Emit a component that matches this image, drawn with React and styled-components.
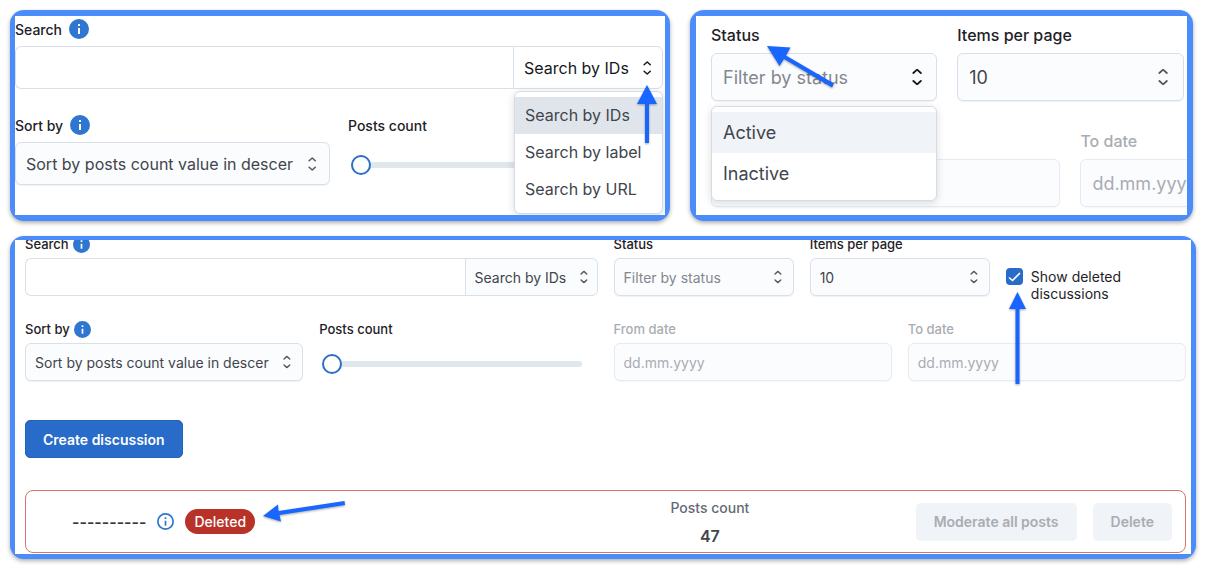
import React from "react";
import styled, { createGlobalStyle, ThemeProvider, css } from "styled-components";

const GlobalStyle = createGlobalStyle`
  *, *::before, *::after { box-sizing: border-box; }
  body {
    margin: 0;
    background: #fff;
    color: #1e2227;
    font-family: Inter, "Liberation Sans", sans-serif;
  }
  input, select, button { font-family: inherit; margin: 0; }
`;

const sizes = {
  medium: { label: 14, text: 16, field: 43, fieldPad: 10, labelRow: 24, labelGap: 5, icon: 20, iconGap: 7, colGap: 18, rowGap: 24, chevron: 14, chevronRight: 14, option: 37, addon: 150 },
  large: { label: 16, text: 18, field: 48, fieldPad: 11, labelRow: 24, labelGap: 6, icon: 20, iconGap: 7, colGap: 20, rowGap: 28, chevron: 17, chevronRight: 15, option: 41, addon: 150 },
  small: { label: 13, text: 14, field: 38, fieldPad: 9, labelRow: 20, labelGap: 4, icon: 17, iconGap: 4, colGap: 16, rowGap: 23, chevron: 13, chevronRight: 12, option: 32, addon: 133 },
};

const Page = styled.main`
  display: flex;
  flex-direction: column;
  gap: 15px;
  padding: 10px 16px 13px 10px;
`;

const TopRow = styled.div`
  display: grid;
  grid-template-columns: minmax(0, 660fr) minmax(0, 503fr);
  gap: 20px;
  padding-right: 3px;
`;

const Frame = styled.section`
  display: flex;
  padding: ${(p) => p.$edge || "6px"};
  border-radius: 14px;
  background: #4a8cf9;
  box-shadow: 0 2px 4px rgba(0, 0, 0, 0.32);
`;

const Screen = styled.div`
  flex: 1;
  min-width: 0;
  overflow: hidden;
  background: #fff;
  padding: ${(p) => p.$pad};
`;

const Rows = styled.form`
  display: flex;
  flex-direction: column;
  gap: ${(p) => p.theme.rowGap}px;
  width: ${(p) => p.$width || "auto"};
  margin-top: ${(p) => p.$top || 0};
`;

const Columns = styled.div`
  display: grid;
  grid-template-columns: ${(p) => p.$cols};
  column-gap: ${(p) => p.theme.colGap}px;
  align-items: ${(p) => p.$align || "start"};
`;

const Field = styled.div`
  position: relative;
  display: flex;
  flex-direction: column;
  gap: ${(p) => p.theme.labelGap}px;
  min-width: 0;
`;

const LabelRow = styled.div`
  display: flex;
  align-items: center;
  gap: ${(p) => p.theme.iconGap}px;
  height: ${(p) => p.theme.labelRow}px;
`;

const Label = styled.label`
  font-size: ${(p) => p.theme.label}px;
  font-weight: 500;
  white-space: nowrap;
  color: ${(p) => (p.$muted ? "#a8acb3" : "#1e2227")};
`;

const box = css`
  width: 100%;
  height: ${(p) => p.theme.field}px;
  padding: 0 ${(p) => p.theme.fieldPad}px;
  border: 1px solid #d9e0e9;
  border-radius: 6px;
  background: #fbfcfe;
  font-size: ${(p) => p.theme.text}px;
  color: #41454c;
  outline: none;
`;

const SelectWrap = styled.div`
  position: relative;
  display: flex;
  flex: ${(p) => (p.$addon ? `0 0 ${p.theme.addon}px` : "none")};
  color: ${(p) => (p.$active ? "#15181c" : "#545962")};
`;

const NativeSelect = styled.select`
  ${box}
  appearance: none;
  padding-right: 24px;
  box-shadow: 0 1px 1px rgba(30, 50, 80, 0.07);
  ${(p) => p.$placeholder && "color: #83878e;"}
  ${(p) => p.$addon && "border-radius: 0 6px 6px 0; box-shadow: none; padding-right: 0;"}
  ${(p) => p.$active && p.$addon && "background: #fff; color: #15181c;"}
`;

const Chevron = styled.svg`
  position: absolute;
  top: 50%;
  right: ${(p) => p.theme.chevronRight - (p.$addon ? 2 : 0)}px;
  height: ${(p) => p.theme.chevron}px;
  transform: translateY(-50%);
  pointer-events: none;
`;

const SearchGroup = styled.div`
  display: flex;
`;

const SearchInput = styled.input`
  ${box}
  flex: 1;
  min-width: 0;
  border-right: 0;
  border-radius: 6px 0 0 6px;
  background: #fff;
`;

const DateInput = styled.input`
  ${box}
  border-color: #e6ebf1;
  box-shadow: 0 1px 1px rgba(30, 50, 80, 0.04);
  &::placeholder { color: #a8acb3; opacity: 1; }
`;

const Slider = styled.input`
  appearance: none;
  align-self: stretch;
  height: 20px;
  margin: ${(p) => (p.theme.field >> 1) - 8}px 16px 0 3px;
  background: transparent;
  &::-webkit-slider-runnable-track {
    height: 6px;
    border-radius: 3px;
    background: #dfe6ec;
  }
  &::-webkit-slider-thumb {
    appearance: none;
    width: 20px;
    height: 20px;
    margin-top: -7px;
    border: 2px solid #2a6fc9;
    border-radius: 50%;
    background: #fff;
  }
`;

const Menu = styled.ul`
  position: absolute;
  top: calc(100% + ${(p) => p.$offset}px);
  right: 0;
  width: ${(p) => p.$width};
  margin: 0;
  padding: 5px 0 ${(p) => p.$bottom}px;
  list-style: none;
  border: 1px solid #d5dce5;
  border-radius: 6px;
  background: #fff;
  box-shadow: 0 2px 8px rgba(0, 0, 0, 0.14);
  z-index: 1;
`;

const Option = styled.li`
  height: ${(p) => p.theme.option}px;
  line-height: ${(p) => p.theme.option}px;
  padding: 0 ${(p) => p.theme.fieldPad}px;
  font-size: ${(p) => p.theme.text}px;
  color: #41454c;
  background: ${(p) => p.$tint || "transparent"};
`;

const CheckLabel = styled.label`
  position: relative;
  display: flex;
  align-items: flex-start;
  gap: 8px;
  margin-bottom: -6px;
  padding-top: 34px;
  font-size: 14px;
  line-height: 17px;
`;

const CheckBox = styled.input`
  appearance: none;
  flex: none;
  width: 17px;
  height: 17px;
  border-radius: 4px;
  background: #286bc8;
`;

const CheckMark = styled.svg`
  position: absolute;
  left: 2px;
  top: 36px;
`;

const Arrow = styled.svg`
  position: absolute;
  top: ${(p) => p.$top};
  left: ${(p) => p.$left};
  right: ${(p) => p.$right};
  fill: #1866ff;
  filter: drop-shadow(0 1px 1px rgba(0, 0, 0, 0.35));
  pointer-events: none;
  z-index: 2;
`;

const CreateButton = styled.button`
  display: block;
  height: 38px;
  margin-top: 39px;
  padding: 0 17px;
  border: 1px solid #2263bd;
  border-radius: 5px;
  background: #286bc8;
  color: #fff;
  font-size: 14px;
  font-weight: 600;
`;

const Card = styled.article`
  display: grid;
  grid-template-columns: 21fr 20fr auto;
  align-items: center;
  height: 63px;
  margin-top: 32px;
  padding: 0 13px 0 46px;
  border: 1px solid #d8736c;
  border-radius: 8px;
`;

const Title = styled.div`
  display: flex;
  align-items: center;
  gap: 11px;
  font-size: 16px;
  font-weight: 600;
  color: #35393f;
`;

const Badge = styled.span`
  position: relative;
  padding: 0 9px;
  border-radius: 13px;
  background: #b83227;
  color: #fff;
  font-size: 14px;
  font-weight: 500;
  line-height: 25px;
`;

const Stat = styled.div`
  display: flex;
  flex-direction: column;
  align-items: center;
  gap: 8px;
  line-height: 20px;
`;

const StatLabel = styled.span`
  font-size: 14px;
  font-weight: 500;
  color: #656a73;
`;

const StatValue = styled.span`
  font-size: 16px;
  font-weight: 600;
  color: #41454c;
`;

const Actions = styled.div`
  display: flex;
  gap: 16px;
`;

const QuietButton = styled.button`
  height: 38px;
  padding: 0 18px;
  border: 0;
  border-radius: 5px;
  background: #f0f3f8;
  color: #a9adb3;
  font-size: 14px;
  font-weight: 600;
`;

const InfoSvg = styled.svg`
  flex: none;
  width: ${(p) => p.theme.icon}px;
  height: ${(p) => p.theme.icon}px;
  fill: #2f76d0;
`;

const Info = () => (
  <InfoSvg viewBox="2 2 20 20" aria-hidden="true">
    <path d="M12 2a10 10 0 1 0 0 20 10 10 0 0 0 0-20zm1 15h-2v-6h2v6zm0-8h-2V7h2v2z" />
  </InfoSvg>
);

const InfoOutline = () => (
  <InfoSvg viewBox="2 2 20 20" aria-hidden="true">
    <path d="M11 7h2v2h-2zm0 4h2v6h-2zm1-9a10 10 0 1 0 0 20 10 10 0 0 0 0-20zm0 18a8 8 0 1 1 0-16 8 8 0 0 1 0 16z" />
  </InfoSvg>
);

const Select = ({ id, value, addon, active, placeholder }) => (
  <SelectWrap $addon={addon} $active={active}>
    <NativeSelect id={id} aria-label={addon ? "Search mode" : undefined} $addon={addon} $active={active} $placeholder={placeholder}>
      <option>{value}</option>
    </NativeSelect>
    <Chevron $addon={addon} viewBox="0 0 9 15" fill="none" stroke="currentColor" strokeWidth="1.6" strokeLinecap="round" strokeLinejoin="round" aria-hidden="true">
      <path d="M1.200 4 4.500 1 7.800 4M1.200 11 4.500 14 7.800 11" />
    </Chevron>
  </SelectWrap>
);

const LabeledField = ({ id, label, info, muted, children }) => (
  <Field>
    {label && (
      <LabelRow>
        <Label htmlFor={id} $muted={muted}>{label}</Label>
        {info && <Info />}
      </LabelRow>
    )}
    {children}
  </Field>
);

const SearchPanel = () => (
  <ThemeProvider theme={sizes.medium}>
    <Frame $edge="6px 5px">
      <Screen $pad="1px 2px 30px 0">
        <Rows>
          <LabeledField id="a-search" label="Search" info>
            <SearchGroup>
              <SearchInput id="a-search" type="text" />
              <Select addon active value="Search by IDs" />
            </SearchGroup>
            <Menu role="listbox" aria-label="Search mode" $offset={2} $width="149px" $bottom={5}>
              <Option role="option" aria-selected="true" $tint="#dfe5eb">Search by IDs</Option>
              <Option role="option" aria-selected="false">Search by label</Option>
              <Option role="option" aria-selected="false">Search by URL</Option>
            </Menu>
            <Arrow $top="68px" $right="6px" width="20" height="59" aria-hidden="true">
              <path d="M10 0 20 19H12V58H8V19H0z" />
            </Arrow>
          </LabeledField>
          <Columns $cols="minmax(0, 1fr) minmax(0, 1fr)">
            <LabeledField id="a-sort" label="Sort by" info>
              <Select id="a-sort" value="Sort by posts count value in descer" />
            </LabeledField>
            <LabeledField id="a-count" label="Posts count">
              <Slider id="a-count" type="range" min="0" max="100" defaultValue="0" />
            </LabeledField>
          </Columns>
        </Rows>
      </Screen>
    </Frame>
  </ThemeProvider>
);

const StatusPanel = () => (
  <ThemeProvider theme={sizes.large}>
    <Frame>
      <Screen $pad="7px 0 7px 15px">
        <Rows $width="151%">
          <Columns $cols="repeat(3, minmax(0, 1fr))">
            <LabeledField id="b-status" label="Status">
              <Select id="b-status" active placeholder value="Filter by status" />
              <Menu role="listbox" aria-label="Status" $offset={5} $width="100%" $bottom={6}>
                <Option role="option" aria-selected="true" $tint="#f0f3f8">Active</Option>
                <Option role="option" aria-selected="false">Inactive</Option>
              </Menu>
              <Arrow $top="23px" $left="56px" width="68" height="42" aria-hidden="true">
                <path d="M0 0 23.500 1.500 19 9.500 67 37.500 65 41.500 17 13 12.500 20z" />
              </Arrow>
            </LabeledField>
            <LabeledField id="b-items" label="Items per page">
              <Select id="b-items" value="10" />
            </LabeledField>
          </Columns>
          <Columns $cols="repeat(2, minmax(0, 1fr))" $align="end">
            <LabeledField>
              <DateInput type="text" aria-label="Start" disabled />
            </LabeledField>
            <LabeledField id="b-to" label="To date" muted>
              <DateInput id="b-to" type="text" placeholder="dd.mm.yyyy" disabled />
            </LabeledField>
          </Columns>
        </Rows>
      </Screen>
    </Frame>
  </ThemeProvider>
);

const DiscussionPanel = () => (
  <ThemeProvider theme={sizes.small}>
    <Frame $edge="4px 5px 5px">
      <Screen $pad="0 5px 1px 10px">
        <Rows $top="-6px">
          <Columns $cols="repeat(2, minmax(0, 1fr))">
            <LabeledField id="c-search" label="Search" info>
              <SearchGroup>
                <SearchInput id="c-search" type="text" />
                <Select addon value="Search by IDs" />
              </SearchGroup>
            </LabeledField>
            <Columns $cols="repeat(3, minmax(0, 1fr))">
              <LabeledField id="c-status" label="Status">
                <Select id="c-status" placeholder value="Filter by status" />
              </LabeledField>
              <LabeledField id="c-items" label="Items per page">
                <Select id="c-items" value="10" />
              </LabeledField>
              <CheckLabel>
                <CheckBox type="checkbox" defaultChecked />
                <CheckMark width="13" height="13" fill="none" stroke="#fff" strokeWidth="1.6" aria-hidden="true">
                  <path d="M1 7.500 4.500 10.500 12 3" />
                </CheckMark>
                Show deleted discussions
                <Arrow $top="58px" $left="3px" width="17" height="92" aria-hidden="true">
                  <path d="M8.500 0 17 17H10.500V92H6.500V17H0z" />
                </Arrow>
              </CheckLabel>
            </Columns>
          </Columns>
          <Columns $cols="repeat(4, minmax(0, 1fr))">
            <LabeledField id="c-sort" label="Sort by" info>
              <Select id="c-sort" value="Sort by posts count value in descer" />
            </LabeledField>
            <LabeledField id="c-count" label="Posts count">
              <Slider id="c-count" type="range" min="0" max="100" defaultValue="0" />
            </LabeledField>
            <LabeledField id="c-from" label="From date" muted>
              <DateInput id="c-from" type="text" placeholder="dd.mm.yyyy" disabled />
            </LabeledField>
            <LabeledField id="c-to" label="To date" muted>
              <DateInput id="c-to" type="text" placeholder="dd.mm.yyyy" disabled />
            </LabeledField>
          </Columns>
        </Rows>
        <CreateButton type="button">Create discussion</CreateButton>
        <Card>
          <Title>
            <span>----------</span>
            <InfoOutline />
            <Badge>
              Deleted
              <Arrow $top="-8px" $left="calc(100% + 8px)" width="83" height="22" aria-hidden="true">
                <path d="M0 15 15 3.500 15.500 10 81.500 0 82 4 16.500 14 18 20.500z" />
              </Arrow>
            </Badge>
          </Title>
          <Stat>
            <StatLabel>Posts count</StatLabel>
            <StatValue>47</StatValue>
          </Stat>
          <Actions>
            <QuietButton type="button" disabled>Moderate all posts</QuietButton>
            <QuietButton type="button" disabled>Delete</QuietButton>
          </Actions>
        </Card>
      </Screen>
    </Frame>
  </ThemeProvider>
);

export default function App() {
  return (
    <>
      <GlobalStyle />
      <Page>
        <TopRow>
          <SearchPanel />
          <StatusPanel />
        </TopRow>
        <DiscussionPanel />
      </Page>
    </>
  );
}
